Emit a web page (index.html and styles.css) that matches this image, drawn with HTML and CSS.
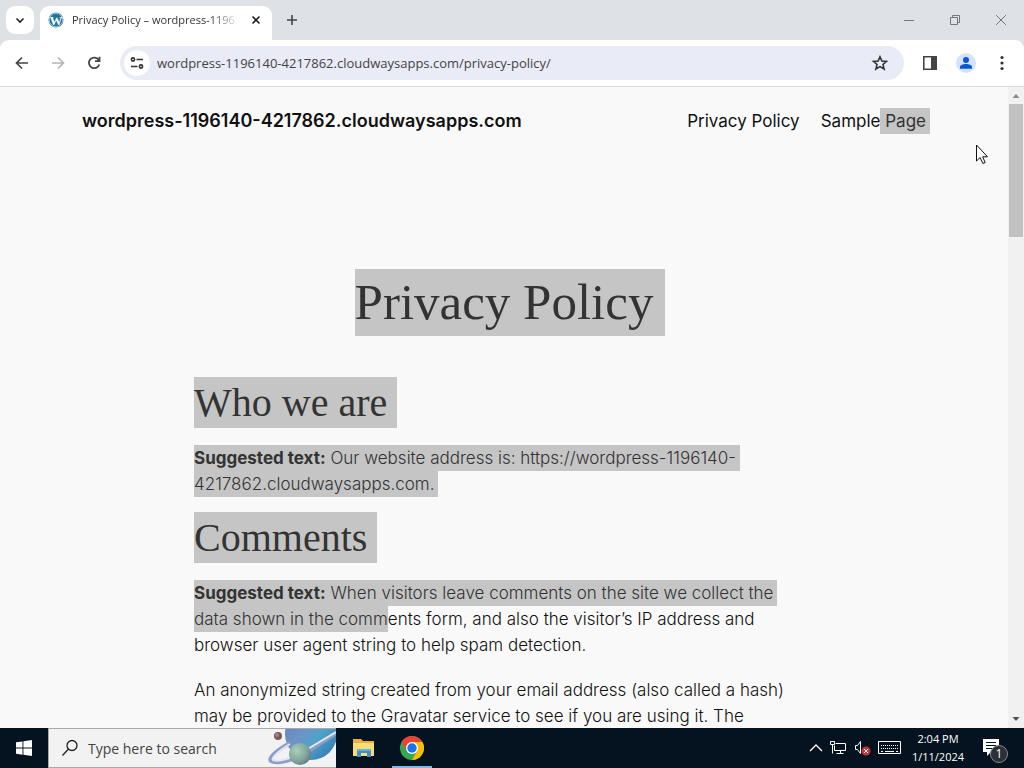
FILE: index.html
```html
<!DOCTYPE html>
<html lang="en">
<head>
    <meta charset="UTF-8">
    <title>Privacy Policy – wordpress-1196140-4217862.cloudwaysapps.com</title>
    <link rel="stylesheet" href="styles.css">
</head>
<body>
    <div class="tabs">
        <button class="tab-search" aria-label="Search tabs">
            <svg width="28" height="28" viewBox="0 0 28 28"><path d="M10.500 12.500l3.500 3.500 3.500-3.500" fill="none" stroke="#222" stroke-width="1.600"/></svg>
        </button>
        <div class="tab">
            <svg width="16" height="16" viewBox="0 0 16 16">
                <circle cx="8" cy="8" r="7.500" fill="#21759b"/>
                <circle cx="8" cy="8" r="6.800" fill="none" stroke="#d9edf5" stroke-width=".7"/>
                <text x="8" y="13" text-anchor="middle" class="wp">W</text>
            </svg>
            <span class="tab-title">Privacy Policy – wordpress-1196</span>
            <button class="tab-close" aria-label="Close tab">
                <svg width="16" height="16" viewBox="0 0 16 16"><path d="M4.500 4.500l7 7M11.500 4.500l-7 7" stroke="#222" stroke-width="1.600"/></svg>
            </button>
        </div>
        <button class="new-tab" aria-label="New tab">
            <svg width="16" height="16" viewBox="0 0 16 16"><path d="M8 3v10M3 8h10" stroke="#444" stroke-width="1.600"/></svg>
        </button>
        <div class="win-buttons">
            <button aria-label="Minimize"><svg width="12" height="12" viewBox="0 0 12 12"><path d="M1 6.500h10" stroke="#777"/></svg></button>
            <button aria-label="Restore"><svg width="12" height="12" viewBox="0 0 12 12"><path d="M1.500 3.500h7v7h-7zM3.500 3.500v-2h7v7h-2" fill="none" stroke="#777"/></svg></button>
            <button aria-label="Close"><svg width="12" height="12" viewBox="0 0 12 12"><path d="M1 1l10 10M11 1L1 11" stroke="#777"/></svg></button>
        </div>
    </div>

    <div class="toolbar">
        <button aria-label="Back"><svg width="20" height="20" viewBox="0 0 20 20"><path d="M16 10H5M10 4.500L4.500 10l5.500 5.500" fill="none" stroke="#444" stroke-width="1.700"/></svg></button>
        <button aria-label="Forward"><svg width="20" height="20" viewBox="0 0 20 20"><path d="M4 10h11M10 4.500l5.500 5.500-5.500 5.500" fill="none" stroke="#b4b4b4" stroke-width="1.700"/></svg></button>
        <button aria-label="Reload"><svg width="20" height="20" viewBox="0 0 20 20"><path d="M14.700 7A5.300 5.300 0 1 0 15.300 11.500M15.500 3.800v4.400h-4.500" fill="none" stroke="#444" stroke-width="1.800"/></svg></button>
        <div class="omnibox">
            <button class="site-info" aria-label="Site information">
                <svg width="16" height="16" viewBox="0 0 16 16" fill="none" stroke="#333" stroke-width="1.600"><circle cx="4" cy="4.500" r="1.600"/><path d="M7.500 4.500H14M2 11.500h6.500"/><circle cx="12" cy="11.500" r="1.600"/></svg>
            </button>
            <input type="text" class="url" aria-label="Address" value="wordpress-1196140-4217862.cloudwaysapps.com/privacy-policy/">
            <button class="star" aria-label="Bookmark this page">
                <svg width="20" height="20" viewBox="0 0 20 20"><path d="M10 3.800l1.900 4.200 4.600.4-3.500 3.100 1.100 4.500-4.100-2.400L5.900 16 7 11.500 3.500 8.400l4.600-.4z" fill="none" stroke="#333" stroke-width="1.600"/></svg>
            </button>
        </div>
        <button aria-label="Side panel"><svg width="20" height="20" viewBox="0 0 20 20"><path d="M3.800 3.800h12.400v12.400H3.800z" fill="#fff" stroke="#444" stroke-width="1.600"/><path d="M11 3h6v14h-6z" fill="#444"/></svg></button>
        <button aria-label="Profile"><svg width="20" height="20" viewBox="0 0 20 20"><circle cx="10" cy="10" r="10" fill="#d3e3fd"/><circle cx="10" cy="7" r="3" fill="#0b57d0"/><path d="M4 15.800v-1.800c0-2 3-3 6-3s6 1 6 3v1.800z" fill="#0b57d0"/></svg></button>
        <button aria-label="Menu"><svg width="20" height="20" viewBox="0 0 20 20" fill="#333"><circle cx="10" cy="4.500" r="1.600"/><circle cx="10" cy="10" r="1.600"/><circle cx="10" cy="15.500" r="1.600"/></svg></button>
    </div>

    <div class="viewport">
        <div class="page">
            <header class="site-header">
                <a class="site-title" href="#">wordpress-1196140-4217862.cloudwaysapps.com</a>
                <nav>
                    <a href="#">Privacy Policy</a>
                    <a href="#">Sample<mark class="line"> Page</mark></a>
                </nav>
            </header>
            <main>
                <h1><mark>Privacy Policy</mark></h1>
                <div class="content">
                    <h2><mark>Who we are</mark></h2>
                    <p><mark class="line"><strong>Suggested text:</strong> Our website address is: https://wordpress-1196140-4217862.cloudwaysapps.com.</mark></p>
                    <h2><mark>Comments</mark></h2>
                    <p><mark class="line"><strong>Suggested text:</strong> When visitors leave comments on the site we collect the</mark> <mark>data shown in the comm</mark>ents form, and also the visitor’s IP address and browser user agent string to help spam detection.</p>
                    <p>An anonymized string created from your email address (also called a hash) may be provided to the Gravatar service to see if you are using it. The</p>
                </div>
            </main>
        </div>
        <div class="scrollbar">
            <svg width="16" height="17" viewBox="0 0 16 17"><path d="M4.500 11L8 7l3.500 4z" fill="#8a8a8a"/></svg>
            <div class="thumb"></div>
            <svg class="down" width="16" height="17" viewBox="0 0 16 17"><path d="M4.500 6L8 10l3.500-4z" fill="#505050"/></svg>
        </div>
        <svg class="cursor" width="14" height="21" viewBox="0 0 14 21"><path d="M1.500 1v16l3.600-3.500 2.700 6 2.400-1-2.600-5.700h4.900z" fill="#fff" stroke="#111"/></svg>
    </div>

    <div class="taskbar">
        <button class="start" aria-label="Start">
            <svg width="16" height="16" viewBox="0 0 16 16" fill="#fff"><path d="M0 2.300L6.500 1.400v6.200H0zM7.400 1.300L16 0v7.600H7.400zM0 8.500h6.500v6.200L0 13.800zM7.400 8.500H16V16l-8.600-1.200z"/></svg>
        </button>
        <div class="search">
            <svg width="18" height="18" viewBox="0 0 18 18"><circle cx="11" cy="6.500" r="5" fill="none" stroke="#222" stroke-width="1.300"/><path d="M7.500 10L1.500 16.500" stroke="#222" stroke-width="1.300"/></svg>
            <input type="text" aria-label="Search" placeholder="Type here to search">
            <svg class="planet" width="68" height="38" viewBox="0 0 68 38">
                <defs>
                    <linearGradient id="big" x1="0" y1="0" x2="1" y2="1"><stop offset="0" stop-color="#5b7dbb"/><stop offset=".4" stop-color="#6f93c6"/><stop offset=".6" stop-color="#4fa3c6"/><stop offset="1" stop-color="#2a6fae"/></linearGradient>
                    <radialGradient id="small" cx=".35" cy=".35" r=".7"><stop offset="0" stop-color="#a9cfb8"/><stop offset=".7" stop-color="#7fa39b"/><stop offset="1" stop-color="#657b87"/></radialGradient>
                </defs>
                <circle cx="43" cy="5" r="26" fill="url(#big)"/>
                <path d="M22 14C7 22 0 30 3 32c5 3 22 0 36-9L68 4" fill="none" stroke="#8f9cc4" stroke-width="4"/>
                <path d="M22 15C10 22 3 29 5 31c5 2 20-1 33-10L68 3" fill="none" stroke="#dfe6f5" stroke-width="2"/>
                <circle cx="10" cy="7" r="4" fill="#7b5a5c"/>
                <circle cx="9" cy="6" r="2" fill="#9d8481"/>
                <circle cx="32" cy="25" r="11" fill="url(#small)"/>
            </svg>
        </div>
        <button class="app" aria-label="File Explorer">
            <svg width="24" height="22" viewBox="0 0 24 22"><path d="M1 2h8l2 2h11v15H1z" fill="#e8b13c"/><path d="M1 6h21v13H1z" fill="#fbdb75"/><path d="M5 12h14v8h-4v-4H9v4H5z" fill="#3f8fc8"/><path d="M5 12h14v2H5z" fill="#66b0df"/></svg>
        </button>
        <button class="app active" aria-label="Google Chrome">
            <svg width="24" height="24" viewBox="0 0 24 24"><circle cx="12" cy="12" r="12" fill="#34a853"/><path d="M1.600 6A12 12 0 0 1 22.400 6H12L6.800 15z" fill="#ea4335"/><path d="M22.400 6A12 12 0 0 1 12 24l5.200-9L12 6z" fill="#fbbc04"/><circle cx="12" cy="12" r="6" fill="#fff"/><circle cx="12" cy="12" r="4.700" fill="#1a73e8"/></svg>
        </button>
        <div class="tray">
            <svg width="14" height="10" viewBox="0 0 14 10"><path d="M1 8l6-6 6 6" fill="none" stroke="#fff" stroke-width="1.400"/></svg>
            <svg width="17" height="16" viewBox="0 0 17 16" fill="none" stroke="#fff"><path d="M5.500 3.500h10v7h-11v-5M10.500 10.500v3M6.500 13.500h7"/><path d="M.500 1.500h4v3h-4zM2.500 4.500v9"/></svg>
            <svg width="17" height="16" viewBox="0 0 17 16"><path d="M1.500 5.500h2l3-4v12l-3-4h-2z" fill="none" stroke="#fff"/><circle cx="12" cy="11" r="4.500" fill="#c8363a"/><path d="M10 9l4 4M14 9l-4 4" stroke="#fff"/></svg>
            <svg width="23" height="14" viewBox="0 0 23 14" fill="none" stroke="#fff"><path d="M.500.500h22v12H.500z"/><path d="M3 4.500h17M3 7.500h17" stroke-dasharray="1 1"/><path d="M3 10.500h2M7 10.500h9M18 10.500h2"/></svg>
            <div class="clock">
                <div>2:04 PM</div>
                <div>1/11/2024</div>
            </div>
            <div class="notify">
                <svg width="16" height="18" viewBox="0 0 16 18"><path d="M0 0h16v13H8l-4 4v-4H0z" fill="#fff"/><path d="M3 3.500h10M3 6.500h10M3 9.500h7" stroke="#0a1524"/></svg>
                <span class="badge">1</span>
            </div>
        </div>
    </div>
</body>
</html>
```

FILE: styles.css
```css
*{
    margin:0;
    padding:0;
    box-sizing:border-box;
}
body{
    display:flex;
    flex-direction:column;
    height:100vh;
    overflow:hidden;
    font-family:"Open Sans","Noto Sans",sans-serif;
    background-color:#dee1e6;
}
button{
    display:flex;
    align-items:center;
    justify-content:center;
    flex:none;
    border:0;
    background:none;
}
input{
    border:0;
    outline:0;
    background:none;
    font-family:inherit;
}
svg{
    display:block;
    flex:none;
}

/* tab strip */
.tabs{
    display:flex;
    align-items:center;
    height:40px;
    flex:none;
    padding-left:6px;
    background-color:#dee1e6;
}
.tab-search{
    width:28px;
    height:28px;
    border-radius:9px;
    background-color:#fff;
}
.tab{
    display:flex;
    align-items:center;
    align-self:flex-end;
    width:232px;
    height:34px;
    margin-left:6px;
    padding:0 8px 6px;
    border-radius:9px 9px 0 0;
    background-color:#fff;
}
.wp{
    font:bold 13px "Liberation Serif",serif;
    fill:#fff;
}
.tab-title{
    flex:1;
    margin-left:8px;
    overflow:hidden;
    white-space:nowrap;
    font-size:11px;
    line-height:16px;
    color:#333;
    -webkit-mask-image:linear-gradient(to right,#000 82%,transparent);
    mask-image:linear-gradient(to right,#000 82%,transparent);
}
.tab-close{
    width:16px;
    margin-left:8px;
}
.new-tab{
    width:28px;
    margin-left:6px;
}
.win-buttons{
    display:flex;
    margin-left:auto;
}
.win-buttons button{
    width:46px;
    height:40px;
}

/* toolbar */
.toolbar{
    display:flex;
    align-items:center;
    gap:16px;
    height:47px;
    flex:none;
    padding:0 12px;
    border-bottom:1px solid #dcdcdc;
    border-radius:9px 9px 0 0;
    background-color:#fff;
}
.omnibox{
    display:flex;
    align-items:center;
    flex:1;
    height:34px;
    padding:0 14px 0 4px;
    border-radius:17px;
    background-color:#e9ebf6;
}
.site-info{
    width:26px;
    height:26px;
    border-radius:13px;
    background-color:#fff;
}
.url{
    flex:1;
    min-width:0;
    margin-left:7px;
    font-size:13px;
    color:#444;
}

/* web page */
.viewport{
    position:relative;
    display:flex;
    flex:1;
    min-height:0;
    overflow:hidden;
    background-color:#f9f9f9;
}
.page{
    flex:1;
    font-family:Inter,sans-serif;
    font-size:17px;
    line-height:26px;
    color:#111;
}
.site-header{
    display:flex;
    align-items:center;
    justify-content:space-between;
    padding:21px 78px 0 82px;
}
.page a{
    color:inherit;
    text-decoration:none;
}
.site-title{
    font-size:18px;
    font-weight:600;
}
nav{
    display:flex;
    gap:21px;
}
mark{
    padding:3px 0;
    background-color:#c5c5c5;
    color:#333;
}
.line{
    padding-right:4px;
    -webkit-box-decoration-break:clone;
    box-decoration-break:clone;
}
h1,
h2{
    font-family:"Liberation Serif",serif;
    font-weight:400;
}
h1 mark,
h2 mark{
    display:inline-block;
    padding:0 12px 0 0;
}
h1{
    margin-top:135px;
    text-align:center;
    font-size:51px;
    line-height:67px;
}
h1 mark{
    margin-right:-12px;
}
h2{
    margin:15px 0 17px;
    font-size:40px;
    line-height:51px;
}
h2 mark{
    padding-right:10px;
}
.content{
    max-width:620px;
    margin:41px auto 0;
}
.content p{
    font-weight:300;
}
.content strong{
    font-weight:700;
}
p + p{
    margin-top:19px;
}
.scrollbar{
    display:flex;
    flex-direction:column;
    align-items:center;
    width:16px;
    background-color:#f1f1f1;
}
.thumb{
    width:14px;
    height:133px;
    background-color:#c1c1c1;
}
.down{
    margin-top:auto;
}
.cursor{
    position:absolute;
    top:57px;
    right:35px;
}

/* taskbar */
.taskbar{
    display:flex;
    align-items:center;
    height:40px;
    flex:none;
    background-color:#04131f;
}
.start{
    width:48px;
    height:40px;
}
.search{
    display:flex;
    align-items:center;
    width:288px;
    height:40px;
    padding-left:12px;
    border:1px solid #a8a8a8;
    border-right:0;
    background-color:#f2f2f2;
}
.search input{
    flex:1;
    min-width:0;
    margin-left:9px;
    font-size:14px;
}
.search input::placeholder{
    color:#444;
    opacity:1;
}
.app{
    width:48px;
    height:40px;
    margin-left:4px;
    border-top:2px solid transparent;
    border-bottom:2px solid transparent;
}
.active{
    width:40px;
    border-bottom-color:#76b9ed;
}
.tray{
    display:flex;
    align-items:center;
    gap:7px;
    margin-left:auto;
    padding-right:25px;
    color:#fff;
}
.clock{
    width:60px;
    margin:0 8px 0 0;
    text-align:center;
    white-space:nowrap;
    font-size:11px;
    line-height:18px;
}
.notify{
    position:relative;
}
.badge{
    position:absolute;
    top:6px;
    left:7px;
    width:18px;
    height:18px;
    border:1px solid #888;
    border-radius:9px;
    background-color:#2b2f36;
    text-align:center;
    font-size:12px;
    line-height:16px;
}
```
